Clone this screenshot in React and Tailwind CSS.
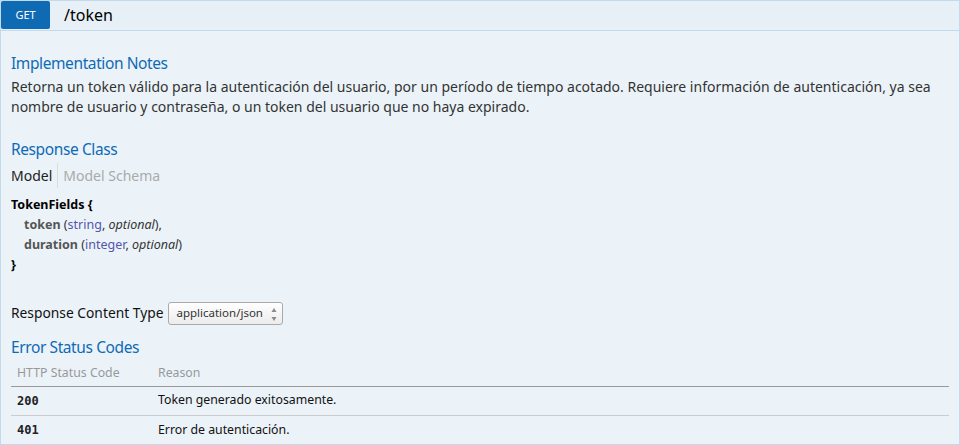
import React from "react";

function Select() {
  return (
    <div className="relative flex h-[23px] w-[115px] items-center rounded-[3px] border border-[#aaa] bg-gradient-to-b from-white to-[#ececec] pl-[7px] text-[11.5px] text-[#333]">
      <span>application/json</span>
      <svg className="absolute left-[102px] top-[4px]" width="6" height="14" viewBox="0 0 6 14">
        <path d="M3 1 L5.5 5 L0.5 5 Z" fill="#8a8a8a" />
        <path d="M3 15 L5.5 11 L0.5 11 Z" transform="translate(0,-1)" fill="#8a8a8a" />
      </svg>
    </div>
  );
}

export default function App() {
  return (
    <div className="h-[445px] w-[960px] overflow-hidden bg-white font-['Noto_Sans','Open_Sans',sans-serif] text-[#333]">
      <div className="flex h-[31px] items-start border border-[#c3d9ec] bg-[#e7f0f7]">
        <div className="flex h-[28px] w-[49px] items-center justify-center rounded-[2px] bg-[#0f6ab4] text-[11px] text-white">
          GET
        </div>
        <div className="ml-[14px] flex h-[28px] items-center text-[16px] text-black">/token</div>
      </div>
      <div className="h-[414px] border border-t-0 border-[#c3d9ec] bg-[#ebf3f9] px-[10px] pt-[21px]">
        <h4 className="text-[15.5px] leading-[22px] tracking-[-0.4px] text-[#0f6ab4]">Implementation Notes</h4>
        <p className="mt-[3px] text-[14px] leading-[20px] text-[#333]">
          Retorna un token válido para la autenticación del usuario, por un período de tiempo acotado. Requiere información de autenticación, ya sea nombre de usuario y contraseña, o un token del usuario que no haya expirado.
        </p>
        <h4 className="mt-[21px] text-[15.5px] leading-[22px] tracking-[-0.4px] text-[#0f6ab4]">Response Class</h4>
        <div className="mt-[3px] flex h-[25px] items-center text-[14px]">
          <span className="text-[#222]">Model</span>
          <span className="mx-[5px] h-[25px] w-px bg-[#dcdcdc]"></span>
          <span className="text-[#aaa]">Model Schema</span>
        </div>
        <div className="mt-[7px] text-[12.5px] leading-[20px]">
          <div className="font-bold text-black">TokenFields {"{"}</div>
          <div className="pl-[13px]">
            <span className="font-bold text-[#555]">token</span> (<span className="text-[#55a]">string</span>, <span className="italic">optional</span>),
          </div>
          <div className="pl-[13px]">
            <span className="font-bold text-[#555]">duration</span> (<span className="text-[#55a]">integer</span>, <span className="italic">optional</span>)
          </div>
          <div className="font-bold text-black">{"}"}</div>
        </div>
        <div className="mt-[26px] flex h-[24px] items-center gap-[5px]">
          <span className="text-[13.8px] text-[#111]">Response Content Type</span>
          <Select />
        </div>
        <h4 className="mt-[11px] text-[15.5px] leading-[22px] tracking-[-0.4px] text-[#0f6ab4]">Error Status Codes</h4>
        <table className="mt-[3px] w-full border-collapse text-[12.3px]">
          <thead>
            <tr className="border-b border-[#999]">
              <th className="h-[25px] w-[141px] px-[6px] text-left font-normal text-[#999]">HTTP Status Code</th>
              <th className="px-[6px] text-left font-normal text-[#999]">Reason</th>
            </tr>
          </thead>
          <tbody>
            <tr className="border-b border-[#ccc]">
              <td className="h-[29px] px-[6px] font-['DejaVu_Sans_Mono',monospace] text-[12px] font-bold text-[#222]">200</td>
              <td className="px-[6px] text-[#111]">Token generado exitosamente.</td>
            </tr>
            <tr>
              <td className="h-[29px] px-[6px] font-['DejaVu_Sans_Mono',monospace] text-[12px] font-bold text-[#222]">401</td>
              <td className="px-[6px] text-[#111]">Error de autenticación.</td>
            </tr>
          </tbody>
        </table>
      </div>
    </div>
  );
}
